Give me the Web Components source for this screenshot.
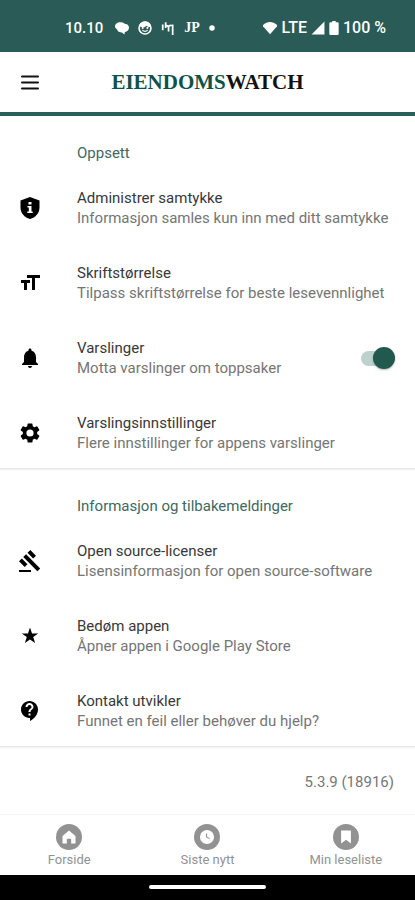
<!DOCTYPE html>
<html lang="no">
<head>
<meta charset="utf-8">
<meta name="viewport" content="width=device-width, initial-scale=1">
<title>EiendomsWatch</title>
<style>
  body {
    margin: 0;
    background: #fff;
    font-family: Roboto, "Liberation Sans", sans-serif;
  }
</style>
</head>
<body>
<watch-app></watch-app>

<script>
const ICONS = {
  menu: '<path d="M4 6.500h16M4 12.500h16M4 18.500h16" fill="none" stroke="currentColor" stroke-width="2" stroke-linecap="round"/>',
  shield: '<path d="M12 1 2.500 4.500v7c0 5.550 4 10.240 9.500 11.500 5.500-1.260 9.500-5.950 9.500-11.500v-7z"/><path d="M10.500 6h3v2.600h-3zM9.500 10h4v5.400h1.200V17H9.300v-1.600h1.500v-3.800H9.500z" fill="#fff"/>',
  size: '<path d="M9 4v3h5v12h3V7h5V4zM3 12h3v7h3v-7h3V9H3z"/>',
  bell: '<path d="M12 22c1.1 0 2-.9 2-2h-4c0 1.1.9 2 2 2zm6-6v-5c0-3.07-1.63-5.64-4.500-6.320V4c0-.83-.67-1.500-1.500-1.500s-1.500.67-1.500 1.500v.680C7.640 5.360 6 7.920 6 11v5l-2 2v1h16v-1z"/>',
  gear: '<path d="M19.140 12.940c.04-.3.06-.61.06-.94s-.02-.64-.07-.94l2.030-1.580a.49.49 0 0 0 .12-.61l-1.920-3.320a.49.49 0 0 0-.59-.22l-2.390.96a7 7 0 0 0-1.620-.94l-.36-2.540A.48.48 0 0 0 13.920 2.400h-3.840a.48.48 0 0 0-.47.41l-.36 2.540a7.300 7.300 0 0 0-1.620.94l-2.390-.96a.48.48 0 0 0-.59.22L2.740 8.870a.48.48 0 0 0 .12.61l2.030 1.580a7 7 0 0 0 0 1.880l-2.030 1.580a.49.49 0 0 0-.12.61l1.920 3.320c.12.22.37.29.59.22l2.390-.96c.5.380 1.030.7 1.620.94l.36 2.540c.05.24.24.41.48.41h3.840c.24 0 .44-.17.47-.41l.36-2.540a7.300 7.300 0 0 0 1.620-.94l2.390.96c.22.080.47 0 .59-.22l1.920-3.320a.48.48 0 0 0-.12-.61zM12 15.600a3.600 3.600 0 1 1 0-7.200 3.600 3.600 0 0 1 0 7.200z"/>',
  gavel: '<path d="M1 21h12v2H1zM5.240 8.070l2.830-2.830 14.140 14.140-2.830 2.830zM12.320 1l5.660 5.660-2.830 2.830-5.660-5.660zM3.830 9.480l5.660 5.660-2.830 2.830L1 12.310z"/>',
  star: '<path d="m12 3.500 2 5.900h6.200l-5 3.700 1.900 6-5.100-3.700-5.100 3.700 1.900-6-5-3.700H10z"/>',
  help: '<path d="M11.500 2C6.810 2 3 5.810 3 10.500S6.810 19 11.500 19h.5v3c4.860-2.340 8-7 8-11.500C20 5.810 16.190 2 11.500 2zm1 14.500h-2v-2h2zm0-3.500h-2c0-3.250 3-3 3-5 0-1.100-.9-2-2-2s-2 .9-2 2h-2c0-2.210 1.790-4 4-4s4 1.790 4 4c0 2.500-3 2.750-3 5z"/>',
  home: '<circle cx="12" cy="12" r="12"/><path d="m12 6-6 5v7h4v-4.500h4V18h4v-7z" fill="#fff"/>',
  clock: '<circle cx="12" cy="12" r="12"/><circle cx="12" cy="12" r="6.500" fill="#fff"/><path d="M11.600 8.800V12l2.800 1.500" fill="none" stroke="currentColor" stroke-width="1"/>',
  bookmark: '<circle cx="12" cy="12" r="12"/><path d="M7.500 6h9v12L12 14.500 7.500 18z" fill="#fff"/>',
  chat: '<path d="M9 2C4 2 0 5 0 9c0 2.500 1.500 4 3.500 5 .5 4 4.500 5.500 8.500 5.500l4 3.500 1-4c4-1 7-4 7-8 0-4-3.500-6.500-7.500-6.500C14.500 2.800 12 2 9 2z"/>',
  face: '<circle cx="12" cy="12" r="10.200" fill="none" stroke="currentColor" stroke-width="2.800"/><path d="M2 9.500C3 4 8 1 12 1s9 3 10 8.500l-4 1.500-3-3-5 3z"/><circle cx="8" cy="12" r="1.700"/><circle cx="16" cy="12" r="1.700"/><path d="M7.500 16q4.500 3.500 9 0" fill="none" stroke="currentColor" stroke-width="2"/>',
  bars: '<path d="M3 6v10M8 2v10M8 8q5-1 5 4v6M13 9q5-3 5 0M20 6v18" fill="none" stroke="currentColor" stroke-width="3"/>',
  dot: '<circle cx="12" cy="12" r="11"/>',
  wifi: '<path d="M12 22.500-1 8C6-.5 18-.5 25 8z"/>',
  signal: '<path d="M23 1v22H1z"/>',
  battery: '<path d="M9 0h6v2h3q2 0 2 2v18q0 2-2 2H6q-2 0-2-2V4q0-2 2-2h3z"/>'
}

class WatchIcon extends HTMLElement {
  constructor() {
    super()
    this.attachShadow({ mode: 'open' })
  }

  connectedCallback() {
    this.shadowRoot.innerHTML = `
    <style>
      :host {
        display: block;
        flex: none;
        width: var(--icon-size, 24px);
        height: var(--icon-size, 24px);
      }
      svg {
        display: block;
        width: 100%;
        height: 100%;
        fill: currentColor;
      }
    </style>
    <svg viewBox="0 0 24 24" preserveAspectRatio="xMidYMid slice" aria-hidden="true">${ICONS[this.getAttribute('name')] || ''}</svg>
    `
  }
}

class StatusBar extends HTMLElement {
  constructor() {
    super()
    this.attachShadow({ mode: 'open' })
    this.shadowRoot.innerHTML = `
    <style>
      :host {
        display: flex;
        align-items: center;
        justify-content: space-between;
        height: 52px;
        padding: 3px 29px 0 65px;
        box-sizing: border-box;
        background: #2a5b57;
        color: #fff;
        font-size: 16px;
        font-weight: 500;
        line-height: 20px;
        --icon-size: 14px;
      }
      div {
        display: flex;
        align-items: center;
      }
      .left { gap: 9px; }
      .right { gap: 4px; }
      .time {
        margin-right: 3px;
        font-size: 15px;
      }
      .jp {
        font: bold 14px "Liberation Serif", serif;
      }
      .dot { --icon-size: 6px; }
      .battery { width: 10px; }
    </style>
    <div class="left">
      <span class="time">10.10</span>
      <watch-icon name="chat"></watch-icon>
      <watch-icon name="face"></watch-icon>
      <watch-icon name="bars"></watch-icon>
      <span class="jp">JP</span>
      <watch-icon class="dot" name="dot"></watch-icon>
    </div>
    <div class="right">
      <watch-icon name="wifi"></watch-icon>
      <span>LTE</span>
      <watch-icon name="signal"></watch-icon>
      <watch-icon class="battery" name="battery"></watch-icon>
      <span>100 %</span>
    </div>
    `
  }
}

class TopBar extends HTMLElement {
  constructor() {
    super()
    this.attachShadow({ mode: 'open' })
    this.shadowRoot.innerHTML = `
    <style>
      :host {
        display: grid;
        grid-template-columns: 24px 1fr 24px;
        align-items: center;
        height: 64px;
        padding: 0 18px;
        box-sizing: border-box;
        border-bottom: 4px solid #2a5f5a;
        background: #fff;
      }
      button {
        padding: 0;
        border: 0;
        background: none;
        color: #111;
      }
      h1 {
        margin: 0;
        text-align: center;
        font: bold 21px/24px "Liberation Serif", serif;
        color: #111;
      }
      span { color: #0f5249; }
    </style>
    <button type="button" aria-label="Meny"><watch-icon name="menu"></watch-icon></button>
    <h1><span>EIENDOMS</span>WATCH</h1>
    `
  }
}

class SettingsSection extends HTMLElement {
  constructor() {
    super()
    this.attachShadow({ mode: 'open' })
  }

  connectedCallback() {
    this.shadowRoot.innerHTML = `
    <style>
      :host {
        display: block;
        padding: 27px 0 15px;
        border-bottom: 1px solid #e8e8e8;
        box-shadow: 0 1px 1px #f2f2f2;
      }
      h2 {
        margin: 0 20px 25px 77px;
        font-size: 15px;
        font-weight: 400;
        line-height: 20px;
        color: #40695f;
      }
      .rows {
        display: flex;
        flex-direction: column;
        gap: 35px;
      }
    </style>
    <h2>${this.getAttribute('heading')}</h2>
    <div class="rows"><slot></slot></div>
    `
  }
}

class SettingsRow extends HTMLElement {
  constructor() {
    super()
    this.attachShadow({ mode: 'open' })
  }

  connectedCallback() {
    const toggle = this.hasAttribute('toggle')
    const tag = toggle ? 'label' : 'button'
    this.shadowRoot.innerHTML = `
    <style>
      :host { display: block; }
      .row {
        display: flex;
        align-items: center;
        width: 100%;
        padding: 0 20px 0 18px;
        box-sizing: border-box;
        border: 0;
        background: none;
        color: #000;
        font: inherit;
        font-size: 15px;
        line-height: 20px;
        text-align: left;
        cursor: pointer;
      }
      .text {
        flex: 1;
        margin-left: 35px;
      }
      .title, .desc { display: block; }
      .title { color: #383838; }
      .desc { color: #757575; }
      input {
        appearance: none;
        position: relative;
        display: flex;
        align-items: center;
        width: 34px;
        height: 22px;
        margin: 0;
      }
      input::before {
        content: "";
        flex: 1;
        height: 15px;
        border-radius: 8px;
        background: #bdd2ce;
      }
      input::after {
        content: "";
        position: absolute;
        left: 0;
        width: 22px;
        height: 22px;
        border-radius: 50%;
        background: #f5f5f5;
        box-shadow: 0 1px 2px rgba(0, 0, 0, .3);
      }
      input:checked::after {
        left: auto;
        right: 0;
        background: #22594f;
      }
    </style>
    <${tag} class="row">
      <watch-icon name="${this.getAttribute('icon')}"></watch-icon>
      <span class="text">
        <span class="title">${this.getAttribute('heading')}</span>
        <span class="desc"><slot></slot></span>
      </span>
      ${toggle ? '<input type="checkbox" role="switch" checked>' : ''}
    </${tag}>
    `
  }
}

class BottomNav extends HTMLElement {
  constructor() {
    super()
    this.attachShadow({ mode: 'open' })
    this.shadowRoot.innerHTML = `
    <style>
      :host {
        display: block;
        border-top: 1px solid #f2f2f2;
        background: #fff;
      }
      nav { display: flex; }
      a {
        flex: 1;
        display: flex;
        flex-direction: column;
        align-items: center;
        gap: 2px;
        padding: 9px 0 7px;
        color: #929292;
        font-size: 13px;
        line-height: 16px;
        text-decoration: none;
        --icon-size: 26px;
      }
    </style>
    <nav>
      <a href="#forside"><watch-icon name="home"></watch-icon>Forside</a>
      <a href="#siste"><watch-icon name="clock"></watch-icon>Siste nytt</a>
      <a href="#leseliste"><watch-icon name="bookmark"></watch-icon>Min leseliste</a>
    </nav>
    `
  }
}

class WatchApp extends HTMLElement {
  constructor() {
    super()
    this.attachShadow({ mode: 'open' })
    this.shadowRoot.innerHTML = `
    <style>
      :host {
        display: flex;
        flex-direction: column;
        min-height: 100vh;
      }
      main { flex: 1; }
      .version {
        margin: 0;
        padding: 25px 21px 20px;
        font-size: 15px;
        line-height: 20px;
        text-align: right;
        color: #777;
      }
      .gesture {
        display: flex;
        justify-content: center;
        padding: 10px 0 11px;
        background: #000;
      }
      .gesture span {
        width: 28%;
        height: 4px;
        border-radius: 2px;
        background: #fff;
      }
    </style>
    <status-bar></status-bar>
    <top-bar></top-bar>
    <main>
      <settings-section heading="Oppsett">
        <settings-row icon="shield" heading="Administrer samtykke">Informasjon samles kun inn med ditt samtykke</settings-row>
        <settings-row icon="size" heading="Skriftstørrelse">Tilpass skriftstørrelse for beste lesevennlighet</settings-row>
        <settings-row icon="bell" heading="Varslinger" toggle>Motta varslinger om toppsaker</settings-row>
        <settings-row icon="gear" heading="Varslingsinnstillinger">Flere innstillinger for appens varslinger</settings-row>
      </settings-section>
      <settings-section heading="Informasjon og tilbakemeldinger">
        <settings-row icon="gavel" heading="Open source-licenser">Lisensinformasjon for open source-software</settings-row>
        <settings-row icon="star" heading="Bedøm appen">Åpner appen i Google Play Store</settings-row>
        <settings-row icon="help" heading="Kontakt utvikler">Funnet en feil eller behøver du hjelp?</settings-row>
      </settings-section>
      <p class="version">5.3.9 (18916)</p>
    </main>
    <bottom-nav></bottom-nav>
    <div class="gesture"><span></span></div>
    `
  }
}

customElements.define('watch-icon', WatchIcon)
customElements.define('status-bar', StatusBar)
customElements.define('top-bar', TopBar)
customElements.define('settings-section', SettingsSection)
customElements.define('settings-row', SettingsRow)
customElements.define('bottom-nav', BottomNav)
customElements.define('watch-app', WatchApp)
</script>
</body>
</html>
